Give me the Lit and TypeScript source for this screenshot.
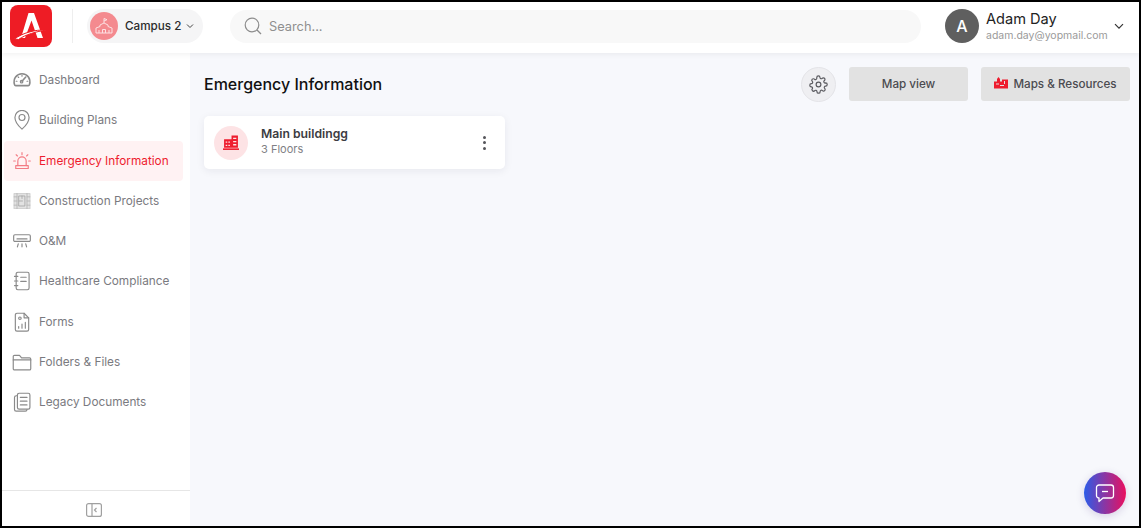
import { LitElement, html, css, svg } from "lit";
import { customElement } from "lit/decorators.js";

const navItems = [
  { label: "Dashboard", icon: svg`<path d="M3 17.500c-2-7 2.500-13 9-13s11 6 9 13c-.2.800-.8 1.200-1.500 1.200h-15c-.7 0-1.300-.4-1.500-1.200z" stroke-width="1.900"/><path d="M12 13.500l4.500-5" stroke-width="1.900"/><circle cx="11.500" cy="14" r="1.500"/><path d="M6 13.500H5M19 13.500h-1M8 9l-.7-.7M12 7.500v-1"/>` },
  { label: "Building Plans", icon: svg`<path d="M12 23s-8.500-7.500-8.500-14a8.500 8.500 0 0 1 17 0C20.500 15.500 12 23 12 23z"/><circle cx="12" cy="9" r="3.600"/>` },
  { label: "Emergency Information", active: true, icon: svg`<path d="M7 17.500V12a5 5 0 0 1 10 0v5.500"/><path d="M4.500 17.500h15v3.500h-15z"/><path d="M12 2v2.500M5 4.500l1.500 1.500M19 4.500L17.500 6M2 12h2M20 12h2"/>` },
  { label: "Construction Projects", construction: true, icon: svg`<path d="M2.500 3h19v18h-19z" fill="#e2e2e2" stroke="#d2d2d2"/><path d="M6 3v18M18 3v18M2.500 7h3.500M2.500 12h3.500M2.500 17h3.500M18 7h3.500M18 12h3.500M18 17h3.500" stroke="#b5b5b5" stroke-width="1"/><path d="M8.500 6h7v12h-7zM8.500 12h4M12 6v3" stroke="#a5a5a5" stroke-width="1"/>` },
  { label: "O&M", icon: svg`<path d="M3.500 4.500h17a1.500 1.500 0 0 1 1.500 1.500v5a1.500 1.500 0 0 1-1.500 1.500h-17A1.500 1.500 0 0 1 2 11V6a1.500 1.500 0 0 1 1.500-1.500z"/><path d="M6 9.500h12M7.500 15.500l-1 3.500M12 15.500V19M16.500 15.500l1 3.500"/>` },
  { label: "Healthcare Compliance", icon: svg`<rect x="5" y="1.500" width="15.500" height="21" rx="2"/><path d="M3 6.500h4M3 12h4M3 17.500h4M10.500 7.500h6.500M10.500 12.500h6.500"/>` },
  { label: "Forms", icon: svg`<path d="M6 1.500h8.500L20 7v14a2 2 0 0 1-2 2H6a2 2 0 0 1-2-2V3.500a2 2 0 0 1 2-2z"/><path d="M14.500 1.500V7H20"/><path d="M8 19.500v-2M12 19.500v-5M16 19.500v-7"/><circle cx="9.500" cy="7.500" r="1.500"/>` },
  { label: "Folders & Files", icon: svg`<path d="M1.500 5.500A1.500 1.500 0 0 1 3 4h6l2.500 3h9.500a1.500 1.500 0 0 1 1.500 1.500V20a1.500 1.500 0 0 1-1.500 1.500H3A1.500 1.500 0 0 1 1.500 20z"/><path d="M1.500 9.500h21"/>` },
  { label: "Legacy Documents", icon: svg`<rect x="6.500" y="1.500" width="15" height="19" rx="2"/><path d="M10 6.500h8M10 11h8M10 15.500h8"/><path d="M6.500 4.500H5a2 2 0 0 0-2 2V21a2 2 0 0 0 2 2h11a2 2 0 0 0 2-2"/>` },
];

const buildingIcon = svg`<path d="M0 12.500h15V14H0z"/><path d="M1 4h7v8H1zM8 .500h6V12H8z"/><path d="M2.500 6h1.500v1.300H2.500zM5 6h1.500v1.300H5zM2.500 9h1.500v1.300H2.500zM5 9h1.500v1.300H5zM9.500 2.500h3v1.200h-3zM9.500 5.500h3v1.200h-3zM9.500 8.500h3v1.200h-3z" fill="#fde3e5"/>`;

@customElement("app-root")
export class AppRoot extends LitElement {
  static styles = css`
    :host { display: block; width: 1141px; height: 528px; font-family: Inter, "Liberation Sans", sans-serif; }
    * { box-sizing: border-box; }
    .frame { position: relative; width: 1141px; height: 528px; border: 2px solid #000; display: flex; flex-direction: column; background: #f7f8fc; overflow: hidden; }
    header { height: 51px; flex: none; background: #fff; display: flex; align-items: center; padding: 0 15px 3px 8px; position: relative; z-index: 2; box-shadow: 0 2px 5px rgba(0,0,0,.05); }
    .logo { width: 42px; height: 42px; flex: none; display: block; }
    .divider { width: 1px; height: 34px; background: #eeeeee; margin: 0 14px 0 20px; flex: none; }
    .campus { height: 34px; width: 116px; flex: none; border-radius: 17px; background: #f5f5f6; display: flex; align-items: center; padding-left: 3px; font-size: 11.700px; font-weight: 500; color: #2c2c2c; }
    .campus-ic { width: 28px; height: 28px; border-radius: 50%; background: #f48a8f; display: flex; align-items: center; justify-content: center; margin-right: 7px; flex: none; }
    .campus-chev { margin-left: 5px; }
    .search { width: 691px; height: 33px; margin-left: 27px; border-radius: 17px; background: #f8f8f8; display: flex; align-items: center; padding-left: 14px; color: #8f8f8f; font-size: 12.800px; flex: none; gap: 7px; }
    .user { display: flex; align-items: center; margin-left: 24px; flex: 1; }
    .avatar { width: 34px; height: 34px; border-radius: 50%; background: #5f5f5f; color: #fff; font-size: 16px; font-weight: 500; display: flex; align-items: center; justify-content: center; flex: none; margin-right: 7px; }
    .user-text { display: flex; flex-direction: column; }
    .user-name { font-size: 14.600px; line-height: 20px; color: #222; }
    .user-mail { font-size: 10.500px; line-height: 14px; color: #9a9a9a; }
    .user-chev { margin-left: auto; }
    .body { flex: 1; display: flex; min-height: 0; }
    aside { width: 188px; flex: none; background: #fff; display: flex; flex-direction: column; }
    nav { flex: 1; padding: 7px 7px 0 2px; display: flex; flex-direction: column; gap: .25px; }
    .item { height: 40px; display: flex; align-items: center; padding-left: 8px; border-radius: 4px; font-size: 11.800px; color: #7a7a80; gap: 7px; }
    .item svg { flex: none; width: 20px; height: 20px; fill: none; stroke: #8a8a8a; stroke-width: 1.400; stroke-linecap: round; stroke-linejoin: round; }
    .item.active { background: #fff2f3; color: #ee1c2e; }
    .item.active svg { stroke: #f37b84; }
    .foot { height: 36px; flex: none; border-top: 1px solid #e6e6e6; display: flex; align-items: center; justify-content: center; padding: 2px 5px 0 0; }
    main { flex: 1; padding: 14px 9px 0 14px; min-width: 0; }
    .head { height: 34px; display: flex; align-items: center; }
    h1 { margin: 0; font-size: 16px; font-weight: 500; color: #111; flex: 1; }
    .gear { width: 35px; height: 35px; border-radius: 50%; background: #efeff2; border: 1px solid #e4e4e8; display: flex; align-items: center; justify-content: center; margin-right: 13px; }
    .btn { height: 34px; background: #e2e2e2; border-radius: 3px; display: flex; align-items: center; justify-content: center; font-size: 11.650px; font-weight: 500; color: #4b4b50; }
    .btn.map { width: 119px; margin-right: 13px; }
    .btn.res { width: 149px; gap: 5px; }
    .card { margin-top: 15px; width: 301px; height: 53px; background: #fff; border-radius: 5px; box-shadow: 0 2px 8px rgba(30,30,60,.07); display: flex; align-items: center; padding: 0 19px 0 10px; }
    .card-ic { width: 34px; height: 34px; border-radius: 50%; background: #fde3e5; display: flex; align-items: center; justify-content: center; flex: none; margin-right: 13px; }
    .card-text { flex: 1; display: flex; flex-direction: column; padding-bottom: 3px; }
    .card-title { font-size: 12.200px; line-height: 17px; font-weight: 600; color: #3c3c42; }
    .card-sub { font-size: 11px; line-height: 15px; color: #7f7f85; }
    .dots { display: flex; flex-direction: column; gap: 2.500px; }
    .dots i { display: block; width: 3px; height: 3px; border-radius: 50%; background: #55555a; }
    .chat { position: absolute; right: 13px; bottom: 12px; width: 42px; height: 42px; border-radius: 50%; background: linear-gradient(90deg, #2c5ce8, #ea0f5e); display: flex; align-items: center; justify-content: center; box-shadow: 0 2px 8px rgba(60,30,120,.18); }
  `;

  render() {
    return html`
      <div class="frame">
        <header>
          <svg class="logo" viewBox="0 0 42 42" role="img" aria-label="Logo">
            <rect width="42" height="42" rx="8" fill="#ee1c25"/>
            <path d="M18.500 8h5.500l9 25h-5.500l-6-17.500L15 33h-4z" fill="#fff"/>
            <path d="M4.500 34c8-6 20-9.500 32-9-10 1.500-21 4.500-28 9.500z" fill="#fff" stroke="#ee1c25" stroke-width="1"/>
          </svg>
          <div class="divider"></div>
          <div class="campus">
            <div class="campus-ic">
              <svg width="18" height="18" viewBox="0 0 18 18" fill="none" stroke="#fde0e2" stroke-width="1"><path d="M1 16h16v-5l-4-1.500V8L9 6 5 8v1.500L1 11z"/><path d="M9 6V1.500l3 1.200L9 4M4 16v-3M14 16v-3M7.500 16v-3.500h3V16"/></svg>
            </div>
            <span>Campus 2</span>
            <svg class="campus-chev" width="8" height="6" viewBox="0 0 8 6" fill="none" stroke="#444" stroke-width="1"><path d="M1 1.500l3 3 3-3"/></svg>
          </div>
          <div class="search">
            <svg width="18" height="18" viewBox="0 0 18 18" fill="none" stroke="#8c8c8c" stroke-width="1.200"><circle cx="8" cy="8" r="6.800"/><path d="M13 13l4 4"/></svg>
            <span>Search...</span>
          </div>
          <div class="user">
            <div class="avatar">A</div>
            <div class="user-text">
              <span class="user-name">Adam Day</span>
              <span class="user-mail">adam.day@yopmail.com</span>
            </div>
            <svg class="user-chev" width="10" height="7" viewBox="0 0 10 7" fill="none" stroke="#333" stroke-width="1.200"><path d="M1 1.200l4 4 4-4"/></svg>
          </div>
        </header>
        <div class="body">
          <aside>
            <nav>
              ${navItems.map((n) => html`
                <div class="item ${n.active ? "active" : ""}">
                  <svg viewBox="0 0 24 24">${n.icon}</svg>
                  <span>${n.label}</span>
                </div>`)}
            </nav>
            <div class="foot">
              <svg width="16" height="14" viewBox="0 0 16 14" fill="none" stroke="#a0a0a0" stroke-width="1.200"><rect x=".6" y=".6" width="14.800" height="12.800" rx="2"/><path d="M6 .6v12.800M10.500 5l-2 2 2 2"/></svg>
            </div>
          </aside>
          <main>
            <div class="head">
              <h1>Emergency Information</h1>
              <div class="gear">
                <svg width="19" height="19" viewBox="0 0 24 24" fill="none" stroke="#5a5a5f" stroke-width="1.500" stroke-linejoin="round"><circle cx="12" cy="12" r="3"/><path d="M19.400 15a1.650 1.650 0 0 0 .33 1.820l.06.06a2 2 0 1 1-2.830 2.830l-.06-.06a1.650 1.650 0 0 0-2.820 1.170V21a2 2 0 1 1-4 0v-.09a1.650 1.650 0 0 0-2.820-1.110l-.06.06a2 2 0 1 1-2.830-2.830l.06-.06A1.650 1.650 0 0 0 3.090 15H3a2 2 0 1 1 0-4h.09a1.650 1.650 0 0 0 1.110-2.820l-.06-.06a2 2 0 1 1 2.830-2.830l.06.06A1.650 1.650 0 0 0 9.850 4.200V3a2 2 0 1 1 4 0v.09a1.650 1.650 0 0 0 2.820 1.110l.06-.06a2 2 0 1 1 2.830 2.830l-.06.06A1.650 1.650 0 0 0 20.910 10H21a2 2 0 1 1 0 4h-.09a1.650 1.650 0 0 0-1.510 1z"/></svg>
              </div>
              <div class="btn map">Map view</div>
              <div class="btn res">
                <svg width="14" height="14" viewBox="0 0 14 14" fill="#ee1c2e"><path d="M0 4.500h3V2l1.500-2L6 2v2.500h2V2.500h6V11.500H0z"/><path d="M2 6.500h3v1H2zM6 8h4v1H6zM10 4h1v3h-1z" fill="#e2e2e2"/></svg>
                <span>Maps &amp; Resources</span>
              </div>
            </div>
            <div class="card">
              <div class="card-ic">
                <svg width="16" height="15" viewBox="0 0 15 14" fill="#ee1c2e">${buildingIcon}</svg>
              </div>
              <div class="card-text">
                <span class="card-title">Main buildingg</span>
                <span class="card-sub">3 Floors</span>
              </div>
              <div class="dots"><i></i><i></i><i></i></div>
            </div>
          </main>
        </div>
        <div class="chat">
          <svg width="22" height="22" viewBox="0 0 22 22" fill="none" stroke="#fff" stroke-width="1.300" stroke-linejoin="round"><path d="M5 3h12a2.500 2.500 0 0 1 2.500 2.500v8A2.500 2.500 0 0 1 17 16H9l-4 3.500V16a2.500 2.500 0 0 1-2.500-2.500v-8A2.500 2.500 0 0 1 5 3z"/><path d="M8 9.500h6"/></svg>
        </div>
      </div>
    `;
  }
}
